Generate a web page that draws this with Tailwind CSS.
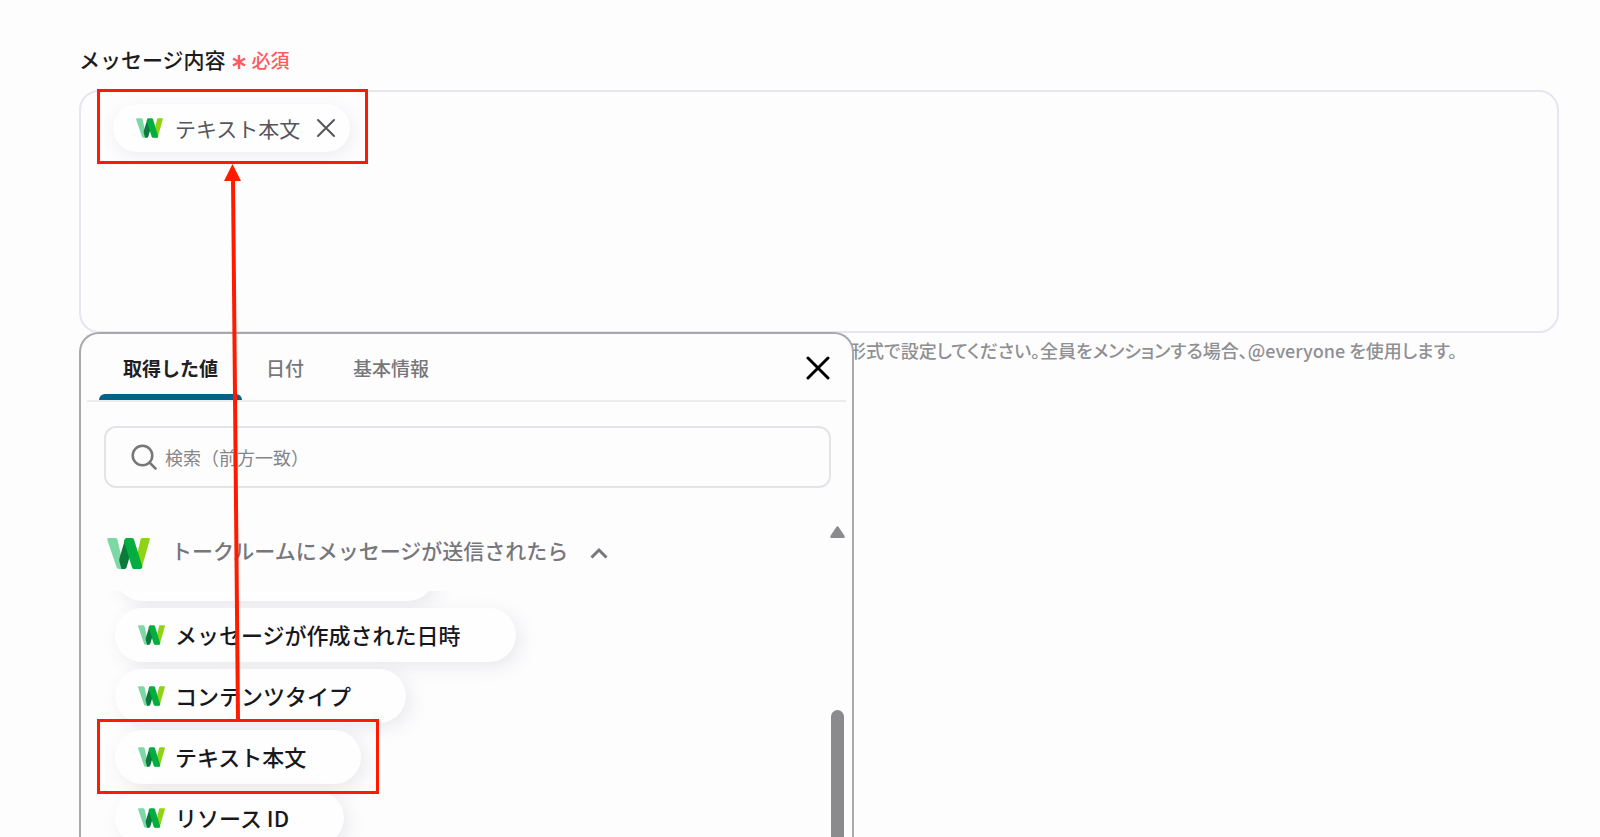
<!DOCTYPE html>
<html lang="ja">
<head>
  <meta charset="UTF-8">
  <meta name="viewport" content="width=device-width, initial-scale=1.0">
  <title>メッセージ内容</title>
  <script src="https://cdn.jsdelivr.net/npm/@tailwindcss/browser@4"></script>
</head>
<body class="relative h-screen overflow-hidden bg-[#fdfdfe] font-['Noto_Sans_CJK_JP',sans-serif] text-[#1c1c20]">

  <!-- Shared logo -->
  <svg class="hidden">
    <symbol id="logo-w" viewBox="0 0 43 31">
      <path fill="#7ed8a6" d="M1.500 0h7q1.500 0 2 1.500L17 31h-5q-2 0-2.500-2L.2 1.800Q0 0 1.500 0z"/>
      <path fill="#8fd313" d="M35 0h6.500q1.700 0 1.300 1.500L35 29q-.5 2-2.500 2H27l6.500-29.500Q34 0 35 0z"/>
      <path fill="#0b7a3b" d="M18 1.500 12.500 20q-.6 2 0 4l2 7h2.500q2 0 2.500-1.500L25 11z"/>
      <path fill="#04ad3f" d="M19.500 0H25q1.500 0 2 1.500L35.500 29q-.5 2-2.500 2H27q-1.500 0-2-1.500L17 3.500Q17.500 0 19.500 0z"/>
    </symbol>
  </svg>

  <main class="pt-11 pl-[79px] pr-[41px]">
    <div id="message-label" class="flex items-center gap-1.5 h-8 text-[21px] font-medium">
      メッセージ内容
      <span class="flex items-center gap-1.5 text-[19px] text-[#ff5a62]">
        <svg class="size-3.5 mt-1" viewBox="0 0 14 14" fill="none" stroke="currentColor" stroke-width="2.400"><path d="M7 0v14M1 3.500l12 7M13 3.500l-12 7"/></svg>
        必須
      </span>
    </div>

    <div class="relative mt-3.5">
      <!-- Message field -->
      <div role="textbox" aria-labelledby="message-label" class="h-[243px] rounded-[20px] border-2 border-[#e6e6ee] px-8 pt-3">
        <span class="inline-flex items-center h-12 rounded-full bg-[#fefeff] pl-[23px] pr-3.5 shadow-[2px_4px_16px_rgba(80,70,100,0.09)] text-[21px] leading-8 text-[#55555a]">
          <svg class="w-[27px] h-5 mr-3"><use href="#logo-w"/></svg>
          テキスト本文
          <button type="button" aria-label="削除" class="ml-4">
            <svg class="size-5" viewBox="0 0 20 20" fill="none" stroke="currentColor" stroke-width="2" stroke-linecap="round"><path d="m2 2 16 16M18 2 2 18"/></svg>
          </button>
        </span>
      </div>
      <p class="pl-[769px] text-[18px] leading-[34px] font-medium text-[#8f8f94] whitespace-nowrap [font-feature-settings:'palt']">形式で設定してください。全員をメンションする場合、@everyone を使用します。</p>

      <!-- Value picker -->
      <section class="absolute left-0 top-[242px] w-[775px] h-[calc(100vh-332px)] flex flex-col rounded-t-[20px] border-2 border-b-0 border-[#a9a9ad] bg-[#fdfdfe]">
        <div class="flex items-end mx-1.5 h-[68px] shrink-0 pl-3 border-b-2 border-[#ededf0] text-[19px] font-medium text-[#77777b]">
          <div role="tablist" class="flex flex-1">
            <button type="button" role="tab" aria-selected="true" class="relative w-[143px] h-16 font-bold text-[#202024]">取得した値<span class="absolute inset-x-0 bottom-0 h-1.5 rounded-t-md bg-[#03628a]"></span></button>
            <button type="button" role="tab" aria-selected="false" class="ml-6 h-16">日付</button>
            <button type="button" role="tab" aria-selected="false" class="ml-[49px] h-16">基本情報</button>
          </div>
          <button type="button" aria-label="閉じる" class="flex items-center h-16 pr-4 text-black">
            <svg class="size-6" viewBox="0 0 24 24" fill="none" stroke="currentColor" stroke-width="3" stroke-linecap="round"><path d="m2 2 20 20M22 2 2 22"/></svg>
          </button>
        </div>

        <div class="flex items-center gap-2 mt-6 ml-[23px] mr-[21px] h-[62px] shrink-0 rounded-xl border-2 border-[#e4e4e8] pl-[25px] text-[#77777b]">
          <svg class="size-[26px] shrink-0" viewBox="0 0 26 26" fill="none" stroke="currentColor" stroke-width="2.500" stroke-linecap="round"><circle cx="11.500" cy="11.500" r="9.800"/><path d="m19 19 5.500 5.500"/></svg>
          <input type="text" aria-label="検索" placeholder="検索（前方一致）" class="flex-1 text-[18px] outline-none placeholder:text-[#85858a]">
        </div>

        <div class="flex flex-1 min-h-0 mt-[30px]">
          <div class="flex flex-col items-start flex-1 min-w-0">
            <button type="button" aria-expanded="true" class="flex items-center h-[66px] shrink-0 pl-[26px] text-[21px] font-medium text-[#77777b]">
              <svg class="w-[43px] h-[31px] mt-1 mr-[21px]"><use href="#logo-w"/></svg>
              トークルームにメッセージが送信されたら
              <svg class="ml-[22px] mt-1 w-[18px] h-3" viewBox="0 0 18 12" fill="none" stroke="currentColor" stroke-width="3"><path d="m1.500 10.500 7.500-7.500 7.500 7.500"/></svg>
            </button>
            <div class="flex-1 min-h-0 w-full overflow-hidden pl-[34px] mt-[7px]">
              <div class="flex flex-col items-start gap-[7px] -mt-11 text-[22px] leading-8 font-medium text-[#18181c]">
                <span class="h-[54px] w-[320px] rounded-full bg-[#fefeff] shadow-[5px_5px_18px_rgba(80,70,90,0.11)]"></span>
                <button type="button" class="flex items-center gap-2.5 h-[54px] rounded-full bg-[#fefeff] pl-[23px] pr-[55px] pb-0.5 shadow-[5px_5px_18px_rgba(80,70,90,0.11)]"><svg class="w-[27px] h-5 mt-0.5"><use href="#logo-w"/></svg>メッセージが作成された日時</button>
                <button type="button" class="flex items-center gap-2.5 h-[54px] rounded-full bg-[#fefeff] pl-[23px] pr-[55px] pb-0.5 shadow-[5px_5px_18px_rgba(80,70,90,0.11)]"><svg class="w-[27px] h-5 mt-0.5"><use href="#logo-w"/></svg>コンテンツタイプ</button>
                <button type="button" class="flex items-center gap-2.5 h-[54px] rounded-full bg-[#fefeff] pl-[23px] pr-[55px] pb-0.5 shadow-[5px_5px_18px_rgba(80,70,90,0.11)]"><svg class="w-[27px] h-5 mt-0.5"><use href="#logo-w"/></svg>テキスト本文</button>
                <button type="button" class="flex items-center gap-2.5 h-[54px] rounded-full bg-[#fefeff] pl-[23px] pr-[55px] pb-0.5 shadow-[5px_5px_18px_rgba(80,70,90,0.11)]"><svg class="w-[27px] h-5 mt-0.5"><use href="#logo-w"/></svg>リソース ID</button>
              </div>
            </div>
          </div>
          <!-- Scrollbar -->
          <div class="flex flex-col items-center w-[15px] mr-[7px] pt-2">
            <svg class="w-[15px] h-3 shrink-0" viewBox="0 0 15 12" fill="#8b8a8d"><path d="M6.500.8q1-1.200 2 0l6 9q.8 2.200-1 2.200h-12q-1.800 0-1-2.200z"/></svg>
            <span class="mt-[172px] w-[13px] flex-1 rounded-t-full bg-[#8b8a8d]"></span>
          </div>
        </div>
      </section>
    </div>
  </main>

  <!-- Annotations -->
  <svg class="absolute left-0 top-0 w-[400px] h-[837px] pointer-events-none" viewBox="0 0 400 837" fill="none" stroke="#ff1a00">
    <rect x="98.500" y="90.500" width="268" height="72" stroke-width="3"/>
    <rect x="98.500" y="720.500" width="279" height="72" stroke-width="3"/>
    <path stroke-width="4" d="M238 720 233 178"/>
    <path fill="#ff1a00" stroke="none" d="m232.500 164 8.500 17h-17z"/>
  </svg>
</body>
</html>
